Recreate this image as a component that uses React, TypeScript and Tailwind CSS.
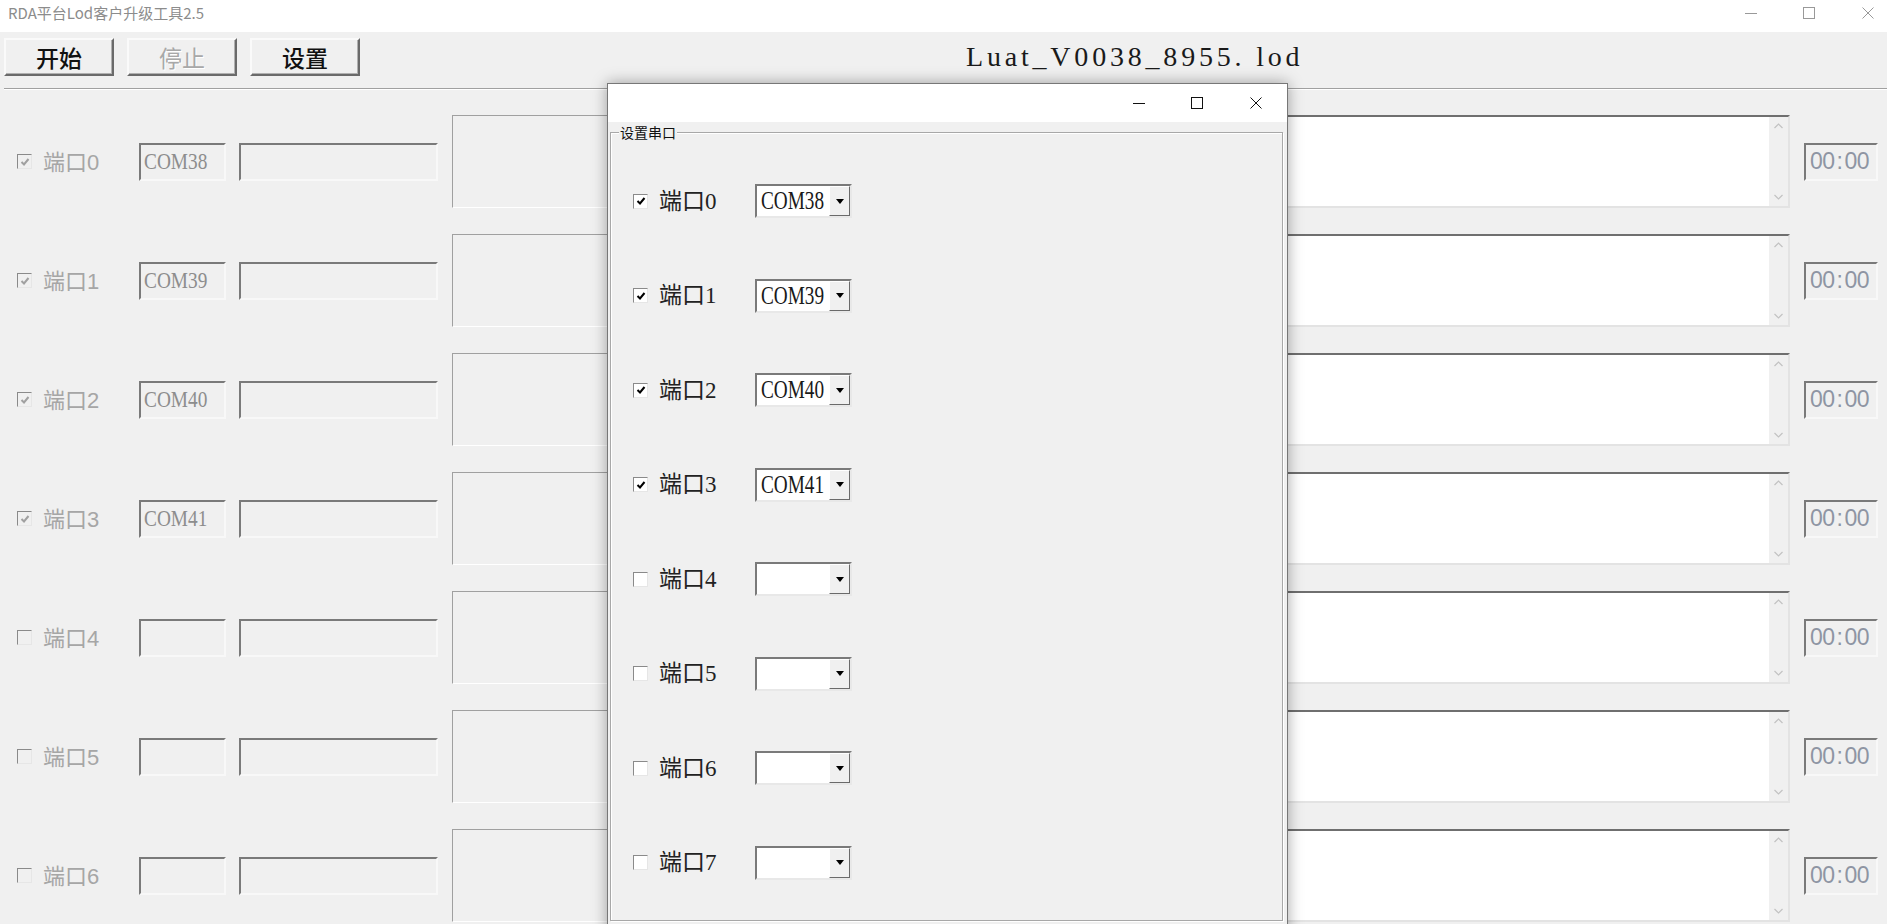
import React from "react";

const serif = "font-['Liberation_Serif','Noto_Sans_CJK_SC',serif]";
const cjk = "font-['Noto_Sans_CJK_SC','Liberation_Sans',sans-serif]";

const mainRows = [
  { id: 0, on: true, com: "COM38" },
  { id: 1, on: true, com: "COM39" },
  { id: 2, on: true, com: "COM40" },
  { id: 3, on: true, com: "COM41" },
  { id: 4, on: false, com: "" },
  { id: 5, on: false, com: "" },
  { id: 6, on: false, com: "" },
];

const dlgRows = [
  { id: 0, on: true, com: "COM38" },
  { id: 1, on: true, com: "COM39" },
  { id: 2, on: true, com: "COM40" },
  { id: 3, on: true, com: "COM41" },
  { id: 4, on: false, com: "" },
  { id: 5, on: false, com: "" },
  { id: 6, on: false, com: "" },
  { id: 7, on: false, com: "" },
];

const WinIcons = ({ color }: { color: string }) => (
  <>
    <svg width="12" height="12" viewBox="0 0 12 12">
      <line x1="0" y1="6.5" x2="12" y2="6.5" stroke={color} strokeWidth="1" />
    </svg>
    <svg width="12" height="12" viewBox="0 0 12 12" className="ml-[46px]">
      <rect x="0.5" y="0.5" width="11" height="11" fill="none" stroke={color} strokeWidth="1" />
    </svg>
    <svg width="12" height="12" viewBox="0 0 12 12" className="ml-[47px]">
      <path d="M0.5 0.5 L11.5 11.5 M11.5 0.5 L0.5 11.5" stroke={color} strokeWidth="1" fill="none" />
    </svg>
  </>
);

const Check = ({ on, disabled }: { on: boolean; disabled?: boolean }) => (
  <div
    className={
      "flex h-[15px] w-[15px] shrink-0 items-center justify-center border border-t-[#8a8a8a] border-l-[#8a8a8a] border-b-[#e6e6e6] border-r-[#e6e6e6] " +
      (disabled ? "bg-[#f0f0f0]" : "bg-white")
    }
  >
    {on && (
      <svg width="10" height="10" viewBox="0 0 10 10">
        <path
          d="M1.5 5 L4 7.5 L8.5 2"
          fill="none"
          stroke={disabled ? "#a0a0a0" : "#000"}
          strokeWidth="2"
        />
      </svg>
    )}
  </div>
);

const Button = ({ label, disabled }: { label: string; disabled?: boolean }) => (
  <div
    className={
      cjk +
      " flex h-[38px] w-[110px] items-center justify-center border-2 border-t-[#fafafa] border-l-[#fafafa] border-b-[#6a6a6a] border-r-[#6a6a6a] bg-[#f0f0f0] text-[23px] shadow-[inset_-1px_-1px_0_#b0b0b0] " +
      (disabled ? "font-normal text-[#a8a8a8] [text-shadow:1px_1px_0_#fff]" : "font-medium text-[#111]")
    }
  >
    {label}
  </div>
);

const Sunken = "border-2 border-t-[#7a7a7a] border-l-[#7a7a7a] border-b-[#f8f8f8] border-r-[#f8f8f8]";

const MainRow = ({ id, on, com }: { id: number; on: boolean; com: string }) => (
  <div className="flex h-[93px] items-center">
    <div className="ml-[17px]">
      <Check on={on} disabled />
    </div>
    <div className={cjk + " ml-[11px] w-[96px] text-[22px] leading-none text-[#a6a6a6]"}>
      端口<span className="font-['Liberation_Sans',sans-serif] font-light">{id}</span>
    </div>
    <div className={Sunken + " flex h-[38px] w-[87px] items-center overflow-hidden bg-[#f0f0f0] pl-[3px]"}>
      <span className={serif + " inline-block origin-left scale-x-[0.84] text-[23px] leading-none text-[#8d8d8d]"}>
        {com}
      </span>
    </div>
    <div className={Sunken + " ml-[13px] h-[38px] w-[199px] bg-[#f0f0f0]"} />
    <div className="ml-[14px] h-[93px] w-[330px] border border-t-[#a0a0a0] border-l-[#a0a0a0] border-b-white border-r-white bg-[#f0f0f0]" />
    <div className="ml-[18px] flex h-[93px] w-[990px] border-2 border-t-[#6f6f6f] border-l-[#6f6f6f] border-b-[#e3e3e3] border-r-[#e3e3e3] bg-white">
      <div className="flex-1" />
      <div className="flex w-[19px] flex-col items-center justify-between bg-[#f0f0f0] py-[6px]">
        <svg width="9" height="6" viewBox="0 0 9 6">
          <path d="M0.5 5 L4.5 1 L8.5 5" fill="none" stroke="#c2c2c2" strokeWidth="1.2" />
        </svg>
        <svg width="9" height="6" viewBox="0 0 9 6">
          <path d="M0.5 1 L4.5 5 L8.5 1" fill="none" stroke="#c2c2c2" strokeWidth="1.2" />
        </svg>
      </div>
    </div>
    <div className={Sunken + " ml-[14px] flex h-[38px] w-[74px] items-center bg-[#f0f0f0] pl-[4px]"}>
      <span className="font-['Liberation_Sans',sans-serif] text-[23px] leading-none tracking-[-0.5px] text-[#8e95a3]">
        00<span className="px-[2px]">:</span>00
      </span>
    </div>
  </div>
);

const DlgRow = ({ id, on, com }: { id: number; on: boolean; com: string }) => (
  <div className="flex h-[94.5px] items-center pl-[22px]">
    <Check on={on} />
    <div className={serif + " ml-[11px] w-[96px] text-[23px] leading-none text-[#222]"}>
      端口{id}
    </div>
    <div className="flex h-[34px] w-[97px] border-2 border-t-[#7a7a7a] border-l-[#7a7a7a] border-b-[#e8e8e8] border-r-[#e8e8e8] bg-white">
      <div className="flex flex-1 items-center overflow-hidden pl-[4px]">
        <span className={serif + " inline-block origin-left scale-x-[0.74] text-[26px] leading-none text-[#1a1a1a]"}>
          {com}
        </span>
      </div>
      <div className="flex w-[21px] items-center justify-center border border-t-white border-l-white border-b-[#6a6a6a] border-r-[#6a6a6a] bg-[#f0f0f0]">
        <svg width="8" height="5" viewBox="0 0 8 5">
          <path d="M0 0 L8 0 L4 5 Z" fill="#000" />
        </svg>
      </div>
    </div>
  </div>
);

export default function App() {
  return (
    <div className="relative h-[924px] w-[1887px] overflow-hidden bg-[#f0f0f0]">
      {/* window title bar */}
      <div className="flex h-[32px] items-start bg-white pt-[3px]">
        <span className={cjk + " ml-[8px] text-[15px] leading-[20px] text-[#8c8c8c]"}>RDA平台Lod客户升级工具2.5</span>
        <div className="ml-auto mr-[13px] mt-[4px] flex items-center">
          <WinIcons color="#999" />
        </div>
      </div>

      {/* toolbar */}
      <div className="flex h-[56px] items-start gap-[13px] pl-[4px] pt-[6px]">
        <Button label="开始" />
        <Button label="停止" disabled />
        <Button label="设置" />
        <div className="ml-[593px] flex h-[38px] items-center">
          <span className={serif + " text-[28px] tracking-[3.8px] text-[#1a1a1a]"}>
            Luat_V0038_8955.&nbsp;lod
          </span>
        </div>
      </div>
      <div className="ml-[4px] h-[2px] border-t border-b border-t-[#a0a0a0] border-b-white" />

      {/* port rows */}
      <div className="flex flex-col gap-[26px] pt-[25px]">
        {mainRows.map((r) => (
          <MainRow key={r.id} {...r} />
        ))}
      </div>

      {/* serial port dialog */}
      <div className="absolute left-[607px] top-[83px] h-[860px] w-[681px] border border-[#777] bg-[#f0f0f0] shadow-[0_0_14px_rgba(0,0,0,0.35)]">
        <div className="flex h-[38px] items-center justify-end bg-white pr-[25px]">
          <WinIcons color="#111" />
        </div>
        <div className="relative ml-[2px] mr-[4px] mt-[10px] h-[789px] border border-[#a8a8a8] shadow-[inset_1px_1px_0_#fff,1px_1px_0_#fff]">
          <span className={cjk + " absolute -top-[11px] left-[8px] bg-[#f0f0f0] px-[1px] text-[14px] leading-[20px] text-[#111]"}>
            设置串口
          </span>
          <div className="flex flex-col pt-[21px]">
            {dlgRows.map((r) => (
              <DlgRow key={r.id} {...r} />
            ))}
          </div>
        </div>
      </div>
    </div>
  );
}
